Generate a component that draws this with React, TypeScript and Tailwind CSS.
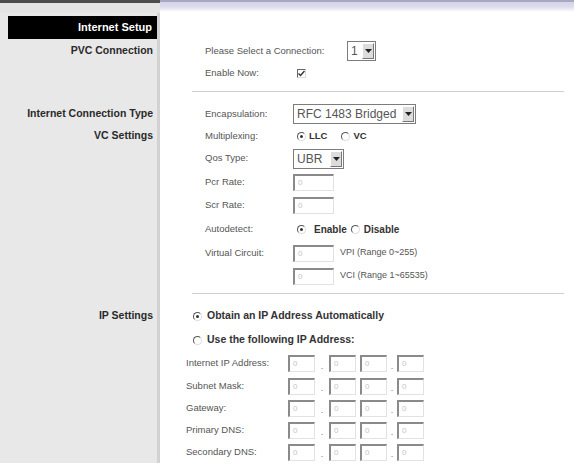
import React from "react";

const font = { fontFamily: '"Liberation Sans", Arial, sans-serif' };

function Row({
  label,
  h,
  children,
  className = "",
}: {
  label?: string;
  h: string;
  children?: React.ReactNode;
  className?: string;
}) {
  return (
    <div className={`flex ${h}`}>
      <div className="w-[160px] shrink-0 bg-[#e8e8e8] border-r-[3px] border-r-[#d2d2d2] flex items-center justify-end pr-[4px]">
        {label && <span className="text-[10.5px] font-bold text-[#2a2a2a] whitespace-nowrap">{label}</span>}
      </div>
      <div className={`flex-1 flex items-center ${className}`}>{children}</div>
    </div>
  );
}

function Field({ label, children }: { label: string; children?: React.ReactNode }) {
  return (
    <>
      <span className="w-[88px] shrink-0 text-[9.5px] text-[#555] whitespace-nowrap">{label}</span>
      {children}
    </>
  );
}

function TextBox({ w = "w-[41px]" }: { w?: string }) {
  return (
    <span
      className={`${w} h-[17px] flex items-center pl-[3px] border-t-2 border-l-2 border-t-[#8a8a8a] border-l-[#8a8a8a] border-b border-r border-b-[#e2e2e2] border-r-[#e2e2e2] text-[8px] text-[#c4c4c4] bg-white`}
    >
      0
    </span>
  );
}

function Select({ value, w }: { value: string; w: string }) {
  return (
    <span className={`${w} h-[20px] flex items-center border border-[#7c7c7c] bg-white`}>
      <span className="flex-1 pl-[3px] text-[12px] text-[#555] leading-none whitespace-nowrap">{value}</span>
      <span className="w-[12px] h-[16px] mr-[1px] bg-[#dcdcdc] border border-t-white border-l-white border-b-[#777] border-r-[#777] flex items-center justify-center">
        <svg width="7" height="4" viewBox="0 0 7 4">
          <path d="M0 0h7L3.5 4z" fill="#222" />
        </svg>
      </span>
    </span>
  );
}

function Radio({ on }: { on?: boolean }) {
  return (
    <span className="w-[9px] h-[9px] rounded-full border border-t-[#555] border-l-[#555] border-b-[#ddd] border-r-[#ddd] bg-white flex items-center justify-center shrink-0">
      {on && <span className="w-[3px] h-[3px] rounded-full bg-[#333]" />}
    </span>
  );
}

function Divider({ h, line }: { h: string; line: string }) {
  return (
    <Row h={h} className={`items-start ${line}`}>
      <div className="ml-[32px] mr-[10px] flex-1 h-px bg-[#cfcfcf]" />
    </Row>
  );
}

function IpRow({ label, h }: { label: string; h: string }) {
  return (
    <Row h={h} className="pl-[26px]">
      <span className="w-[102px] shrink-0 text-[9.5px] text-[#555] whitespace-nowrap">{label}</span>
      <TextBox w="w-[27px]" />
      <span className="w-[14px] text-center text-[9px] text-[#777] self-end pb-[2px]">.</span>
      <TextBox w="w-[27px]" />
      <span className="w-[4px]" />
      <TextBox w="w-[27px]" />
      <span className="w-[10px] text-center text-[9px] text-[#777] self-end pb-[2px]">.</span>
      <TextBox w="w-[27px]" />
    </Row>
  );
}

export default function App() {
  return (
    <div className="w-[574px] h-[465px] overflow-hidden bg-white" style={font}>
      {/* top band */}
      <div className="flex h-[13px]">
        <div className="w-[160px] bg-[#e4e4e4] border-t-[3px] border-t-[#4d4d4d]" />
        <div className="flex-1 bg-[linear-gradient(#a8a8c4_0,#a8a8c4_2px,#d4d4e8_2px,#dcdcec_7px,#ffffff_12px)]" />
      </div>
      {/* section header */}
      <div className="flex h-[27px]">
        <div className="w-[160px] bg-[#e8e8e8] border-r-[3px] border-r-[#d2d2d2] pt-[3px] pl-[8px] pb-[1px]">
          <div className="h-full bg-black flex items-center justify-end pr-[5px]">
            <span className="text-[11px] font-bold text-white">Internet Setup</span>
          </div>
        </div>
        <div className="flex-1" />
      </div>

      <Row label="PVC Connection" h="h-[22px]" className="pl-[45px]">
        <span className="w-[142px] shrink-0 text-[9.5px] text-[#555] whitespace-nowrap">Please Select a Connection:</span>
        <Select value="1" w="w-[29px]" />
      </Row>
      <Row h="h-[22px]" className="pl-[45px]">
        <Field label="Enable Now:">
          <span className="ml-[4px] w-[9px] h-[9px] border border-t-[#666] border-l-[#666] border-b-[#ddd] border-r-[#ddd] bg-white flex items-center justify-center">
            <svg width="7" height="7" viewBox="0 0 7 7">
              <path d="M0.5 3.5l2 2l4-4.5" stroke="#333" strokeWidth="1.4" fill="none" />
            </svg>
          </span>
        </Field>
      </Row>
      <Divider h="h-[19px]" line="pt-[7px]" />

      <Row label="Internet Connection Type" h="h-[22px]" className="pl-[45px]">
        <Field label="Encapsulation:">
          <Select value="RFC 1483 Bridged" w="w-[123px]" />
        </Field>
      </Row>
      <Row label="VC Settings" h="h-[22px]" className="pl-[45px]">
        <Field label="Multiplexing:">
          <span className="ml-[4px] flex items-center gap-[3px]">
            <Radio on />
            <span className="text-[9.5px] font-bold text-[#333]">LLC</span>
            <span className="w-[8px]" />
            <Radio />
            <span className="text-[9.5px] font-bold text-[#333]">VC</span>
          </span>
        </Field>
      </Row>
      <Row h="h-[23px]" className="pl-[45px]">
        <Field label="Qos Type:">
          <Select value="UBR" w="w-[51px]" />
        </Field>
      </Row>
      <Row h="h-[24px]" className="pl-[45px]">
        <Field label="Pcr Rate:">
          <TextBox />
        </Field>
      </Row>
      <Row h="h-[23px]" className="pl-[45px]">
        <Field label="Scr Rate:">
          <TextBox />
        </Field>
      </Row>
      <Row h="h-[24px]" className="pl-[45px]">
        <Field label="Autodetect:">
          <span className="ml-[4px] flex items-center gap-[4px]">
            <Radio on />
            <span className="ml-[4px] text-[10px] font-bold text-[#333]">Enable</span>
            <Radio />
            <span className="text-[10px] font-bold text-[#333]">Disable</span>
          </span>
        </Field>
      </Row>
      <Row h="h-[24px]" className="pl-[45px]">
        <Field label="Virtual Circuit:">
          <TextBox />
          <span className="ml-[6px] text-[9px] text-[#555] whitespace-nowrap">VPI (Range 0~255)</span>
        </Field>
      </Row>
      <Row h="h-[22px]" className="pl-[45px]">
        <Field label="">
          <TextBox />
          <span className="ml-[6px] text-[9px] text-[#555] whitespace-nowrap">VCI (Range 1~65535)</span>
        </Field>
      </Row>
      <Divider h="h-[17px]" line="pt-[6px]" />

      <Row label="IP Settings" h="h-[24px]" className="pl-[33px] gap-[5px]">
        <Radio on />
        <span className="text-[10.5px] font-bold text-[#333] whitespace-nowrap">Obtain an IP Address Automatically</span>
      </Row>
      <Row h="h-[24px]" className="pl-[33px] gap-[5px]">
        <Radio />
        <span className="text-[10.5px] font-bold text-[#333] whitespace-nowrap">Use the following IP Address:</span>
      </Row>
      <IpRow label="Internet IP Address:" h="h-[23px]" />
      <IpRow label="Subnet Mask:" h="h-[22px]" />
      <IpRow label="Gateway:" h="h-[22px]" />
      <IpRow label="Primary DNS:" h="h-[22px]" />
      <IpRow label="Secondary DNS:" h="h-[22px]" />
    </div>
  );
}
